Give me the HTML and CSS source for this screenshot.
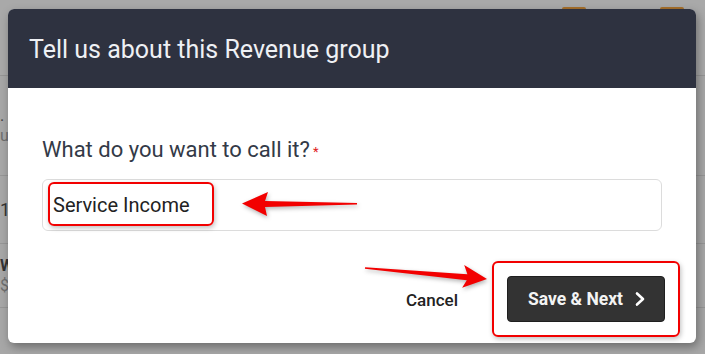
FILE: index.html
```html
<!DOCTYPE html>
<html lang="en">
<head>
  <meta charset="UTF-8" />
  <meta name="viewport" content="width=device-width, initial-scale=1.0"/>
  <title>Revenue Group</title>
  <link rel="stylesheet" href="styles.css">
</head>
<body>
  <!-- Page behind the dialog (dimmed) -->
  <div class="page">
    <div class="topbar">
      <span class="top-btn"></span>
      <span class="top-btn"></span>
    </div>
    <div class="row row-first">
      <span class="row-title">.</span>
      <span class="row-sub">ue</span>
    </div>
    <div class="row row-mid">
      <span class="row-num">1</span>
    </div>
    <div class="row row-last">
      <span class="row-title bold">W</span>
      <span class="row-sub">$</span>
    </div>
  </div>

  <!-- Dialog -->
  <div class="modal">
    <div class="modal-header">
      <h2>Tell us about this Revenue group</h2>
    </div>
    <div class="modal-body">
      <label class="field-label">What do you want to call it?<span class="req">*</span></label>
      <input type="text" class="field-input" value="Service Income">
    </div>
    <div class="modal-footer">
      <button class="btn-cancel">Cancel</button>
      <button class="btn-next">Save &amp; Next
        <svg width="14" height="16" viewBox="0 0 14 16"><path d="M4 2.5 L10 8 L4 13.5" fill="none" stroke="#fff" stroke-width="2.6" stroke-linecap="round" stroke-linejoin="round"/></svg>
      </button>
    </div>
  </div>

  <!-- Screenshot annotations -->
  <div class="mark mark-input"></div>
  <div class="mark mark-button"></div>
  <svg class="arrows" width="705" height="354" viewBox="0 0 705 354">
    <polygon points="242,203.5 268,192 265,201 357,203 357,204.5 265,207 267,216" />
    <polygon points="487,279 464.2,265 467.4,274.2 365.1,267.2 364.9,268.8 466.8,280.2 462.1,287.8" />
  </svg>
</body>
</html>
```

FILE: styles.css
```css
* {
  box-sizing: border-box;
}
body {
  margin: 0;
  width: 705px;
  height: 354px;
  overflow: hidden;
  font-family: Roboto, "Liberation Sans", Arial, sans-serif;
  background-color: #a7a7a7;
  position: relative;
}

/* dimmed page */
.page {
  color: #4a4a4a;
}
.topbar {
  height: 76px;
  display: flex;
  justify-content: flex-end;
  gap: 74px;
  padding: 7px 21px 0 0;
  background-color: #a9a9a9;
  border-bottom: 1px solid #969696;
}
.top-btn {
  width: 24px;
  height: 30px;
  background-color: #a6702c;
  border-radius: 2px;
}
.row {
  display: flex;
  flex-direction: column;
  justify-content: center;
  border-bottom: 1px solid #969696;
  padding-left: 0;
  font-size: 16px;
}
.row-first {
  height: 100px;
}
.row-mid {
  height: 68px;
}
.row-last {
  height: 64px;
}
.row-title {
  line-height: 20px;
  color: #444;
}
.row-title.bold {
  font-weight: 700;
  color: #333;
}
.row-sub {
  line-height: 20px;
  color: #6e6e6e;
}
.row-num {
  font-size: 18px;
  color: #333;
}

/* dialog */
.modal {
  position: absolute;
  left: 8px;
  top: 9px;
  width: 688px;
  background: #fff;
  border-radius: 6px;
  overflow: hidden;
  box-shadow: 2px 4px 10px rgba(0, 0, 0, 0.35);
}
.modal-header {
  height: 79px;
  background-color: #2e3240;
  display: flex;
  align-items: center;
  padding-left: 21px;
}
.modal-header h2 {
  margin: 0;
  font-size: 25px;
  font-weight: 400;
  color: #eef0f4;
  padding-top: 2px;
}
.modal-body {
  padding: 49px 34px 0 34px;
}
.field-label {
  display: block;
  font-size: 22px;
  line-height: 26px;
  color: #333a47;
}
.req {
  color: #e02020;
  font-size: 13px;
  vertical-align: top;
  margin-left: 3px;
  position: relative;
  top: 2px;
}
.field-input {
  display: block;
  width: 100%;
  height: 52px;
  margin-top: 16px;
  border: 1px solid #dcdcdc;
  border-radius: 6px;
  padding: 0 10px;
  font-family: Roboto, "Liberation Sans", Arial, sans-serif;
  font-size: 20px;
  color: #222;
  outline: none;
}
.modal-footer {
  display: flex;
  justify-content: flex-end;
  align-items: center;
  padding: 45px 31px 21px 0;
}
.btn-cancel {
  background: none;
  border: none;
  padding: 0;
  margin-right: 49px;
  font-family: Roboto, "Liberation Sans", Arial, sans-serif;
  font-size: 17px;
  font-weight: 500;
  color: #222;
  margin-top: 2px;
}
.btn-next {
  width: 158px;
  height: 46px;
  display: flex;
  align-items: center;
  gap: 10px;
  padding: 0 0 0 20px;
  background-color: #333333;
  border: 1px solid #1f1f1f;
  border-radius: 4px;
  font-family: Roboto, "Liberation Sans", Arial, sans-serif;
  font-size: 17.5px;
  font-weight: 700;
  color: #f4f4f4;
}

/* annotations */
.mark {
  position: absolute;
  border: 2px solid #f20000;
  border-radius: 6px;
  box-shadow: 1px 2px 5px rgba(0, 0, 0, 0.25);
}
.mark-input {
  left: 48px;
  top: 182px;
  width: 166px;
  height: 44px;
}
.mark-button {
  left: 492px;
  top: 261px;
  width: 188px;
  height: 76px;
}
.arrows {
  position: absolute;
  left: 0;
  top: 0;
  pointer-events: none;
  filter: drop-shadow(1px 2px 2px rgba(0, 0, 0, 0.3));
}
.arrows polygon {
  fill: #f20000;
}
```
